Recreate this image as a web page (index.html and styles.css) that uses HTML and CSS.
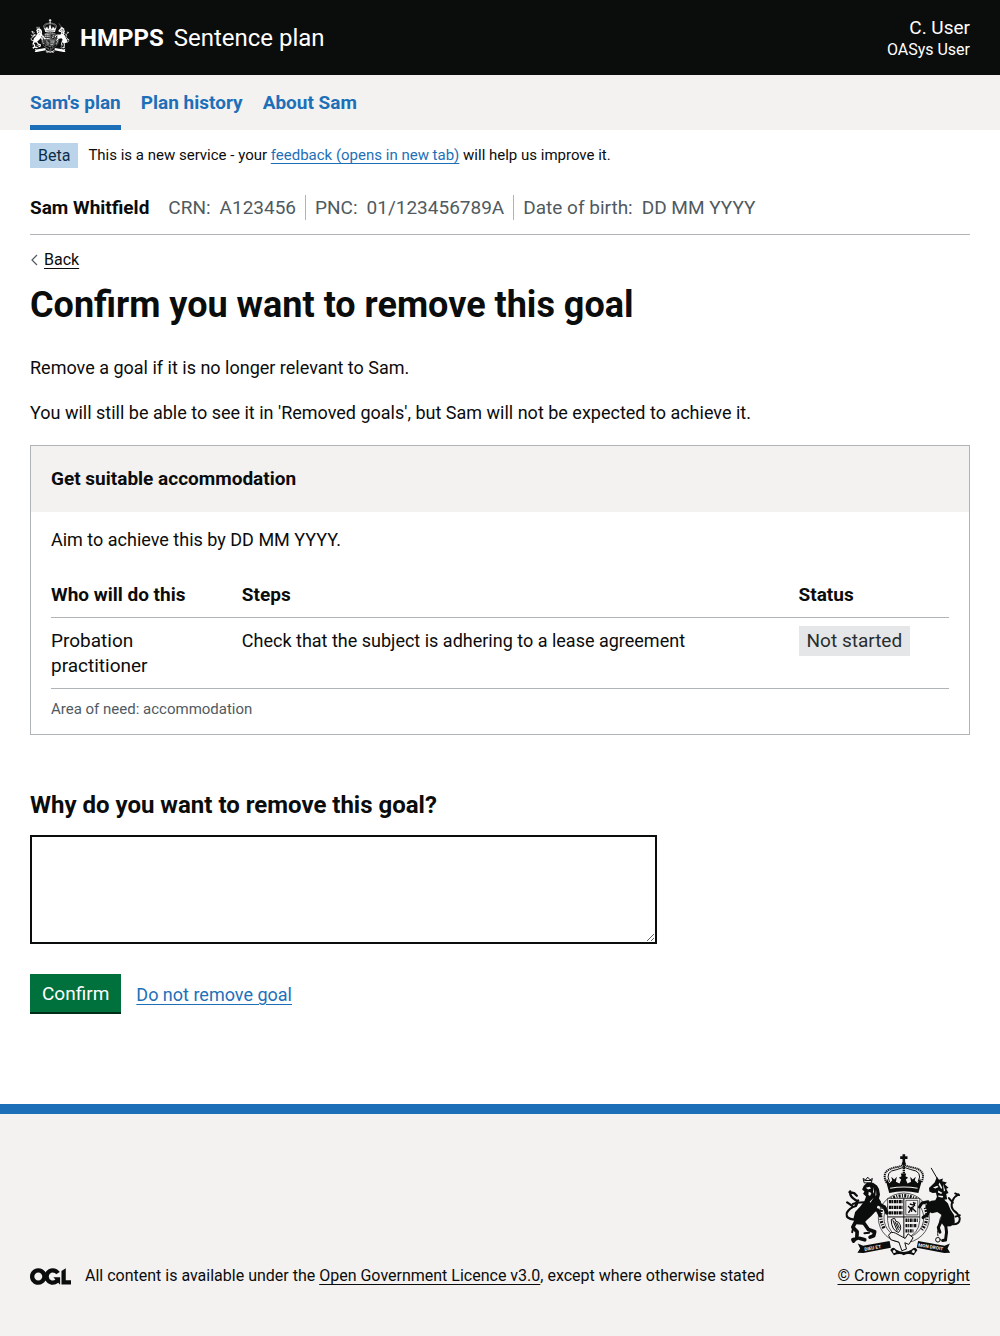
FILE: index.html
```html
<!DOCTYPE html>
<html lang="en">
<head>
<meta charset="utf-8">
<meta name="viewport" content="width=device-width, initial-scale=1">
<title>Remove goal - Sentence plan</title>
<link rel="stylesheet" href="styles.css">
</head>
<body>
<svg class="sprite" aria-hidden="true">
  <symbol id="crest" viewBox="36 26 350 308">
    <!-- crown -->
    <g fill="currentColor">
      <path d="M208 27h8v6h7v8h-7v9h-8v-9h-7v-8h7z"/>
      <circle cx="212" cy="55" r="6"/>
      <path d="M161 100l7 14 9-8-3-11 9 8 8-8-3 15 11 5 5-12-7-5 8-5-2-8h16l-2 8 8 5-7 5 5 12 11-5-3-15 8 8 9-8-3 11 9 8 7-14 4 11-9 33q-44-11-88 0l-9-33z"/>
    </g>
    <g fill="none" stroke="currentColor">
      <path stroke-width="6" stroke-dasharray="4 2" d="M160 113q-20-38 28-47 13-2 24-8 11 6 24 8 48 9 28 47"/>
      <path stroke-width="3" d="M169 110q-16-32 22-37l21-7 21 7q38 5 22 37"/>
      <path stroke-width="7" stroke-dasharray="4 2" d="M212 62v47"/>
    </g>
    <path class="crest-gap" d="M170 128q42-8 84 0l-1 3q-41-8-82 0z"/>

    <!-- garter -->
    <ellipse class="crest-gap" cx="212" cy="219" rx="77" ry="75" stroke="currentColor" stroke-width="2"/>
    <ellipse class="crest-gap" cx="212" cy="219" rx="60" ry="60" stroke="currentColor" stroke-width="2"/>
    <g fill="none" stroke="currentColor">
      <path stroke-width="10" stroke-dasharray="3 4 6 4" d="M146 188q-10 33 7 64M277 188q13 38-11 67M174 162q34-20 76 0"/>
    </g>

    <!-- quartered shield -->
    <path class="crest-gap" stroke="currentColor" stroke-width="2" d="M163 160h97v67q-2 43-48 56-47-13-49-56z"/>
    <g fill="none" stroke="currentColor">
      <path stroke-width="3" d="M212 160v123M163 216h97"/>
      <path stroke-width="10" stroke-dasharray="8 1 4 2" d="M167 170h41M167 187h41M167 204h41"/>
      <path stroke-width="2" d="M218 166h36v44h-36z"/>
      <path stroke-width="4" d="M226 204l7-12-8-9M235 201l2-12 12 12M230 177l14 4-3-10M242 180l5-7M231 190l12-6"/>
      <path stroke-width="3" d="M174 224q0 32 22 39 13-15 0-31-9 1-12-12zM179 226l13 32M185 230l11 25M191 234l8 16"/>
      <path stroke-width="10" stroke-dasharray="6 2 3 2" d="M217 226h39M217 242h35M217 258h26"/>
    </g>

    <!-- lion -->
    <g fill="none" stroke="currentColor" stroke-linejoin="round" stroke-linecap="round">
      <path stroke-width="3" d="M92 112l-3-12 8 4 6-8 7 8 7-4-3 12zM94 106h20"/>
      <path stroke-width="7" d="M62 224q-26-2-23-19 8-16 28-22 10-14-4-20-15-10-13-24M41 172l14 10M48 141l14 3 8 8M74 166l-7 11"/>
      <path stroke-width="11" d="M128 172l25 14 8 18M115 190l18 6 7 14M71 222l-13 25 13 14-1 20-12 4M88 230l17 24 19 7-3 12-11 4M64 284l-4 5M80 281l14 4"/>
      <path stroke-width="6" d="M60 246l-4 16M70 281l22 2M107 264l-14 1M92 172l-22 1-12 4"/>
    </g>
    <g fill="currentColor">
      <path d="M91 122l10-9 18 0 12 8 6 11 3 16-3 12 7 12-12 12-4 14-14 15-15 14-11 13-21-2-7-18 5-19 16-17 12-16 5-14-9-8 4-7-7-6z"/>
    </g>
    <path class="crest-gap" d="M97 128l12-3 4 5-9 3zM106 140l8 4-4 9-5-3zM119 126l3 14-3 6zM128 134l1 16-3 3zM121 158l-10 15-2-3z"/>

    <!-- unicorn -->
    <g fill="none" stroke="currentColor" stroke-linejoin="round" stroke-linecap="round">
      <path stroke-width="3" d="M295 69l19 33"/>
      <path stroke-width="6" d="M357 238q24 2 24-17-5-16-18-24-11-12-4-29 5-14 18-20M379 150l-12-5M360 173l-12-14M381 211l-13 4"/>
      <path stroke-width="9" d="M285 170l-18 4-8 12M292 187l-8 21-14 10M338 238l3 24-3 23M327 225l-11 23 5 14M338 286l-9 1"/>
      <path stroke-width="3" stroke-dasharray="6 3" d="M331 172q18 6 7 26-19 18-19 40-7 19-4 35"/>
      <circle cx="315" cy="285" r="7" stroke-width="3"/>
    </g>
    <g fill="currentColor">
      <path d="M288 129l17-17 7-17 6 9 12-4-2 8 14 4-6 6 11 10-7 3 7 13-7 3 3 16-9 1 11 11 8 19 11 17 2 22-12 11-20 1-12-16 4-19-13-9-16 4-14-7-6-12 5-12 13-7 12-1 5-10-3-13-10 1-10-5z"/>
    </g>
    <path class="crest-gap" d="M300 127l13-5 4 4-10 4zM320 112l8 16-3 4-8-14zM330 116l7 20-4 3zM316 136l12 7-3 4-10-5zM316 151l15 2-2 5-13-3z"/>

    <!-- base and motto ribbon -->
    <path class="crest-gap" stroke="currentColor" stroke-width="3" d="M166 272q6-14 21-7l29 16 9-14 15 12-13 20-12-5 5 19-14 5-9-26-24-7z"/>
    <g fill="currentColor">
      <path d="M73 296l16 7 80-14 4 20-83 16-18-1 8-13zM351 296l-16 7-80-14-4 20 83 16 18-1-8-13z"/>
      <path d="M171 316q9-12 17-2 11 7 24 8 13-1 24-8 9-10 17 2l-11 16q-18-8-30 0-12-8-30 0z"/>
    </g>
    <path class="crest-gap" d="M178 318l6-3 5 8-8 3zM246 318l-6-3-5 8 8 3z"/>
  </symbol>
</svg>

<header class="header">
  <div class="container header-row">
    <a class="brand" href="#">
      <svg class="brand-crest" aria-hidden="true"><use href="#crest"/></svg>
      <strong>HMPPS</strong>
      <span>Sentence plan</span>
    </a>
    <div class="user">
      <span class="user-name">C. User</span>
      <span class="user-role">OASys User</span>
    </div>
  </div>
</header>

<nav class="nav" aria-label="Primary">
  <ul class="container nav-list">
    <li><a class="nav-link nav-link-current" href="#" aria-current="page">Sam's plan</a></li>
    <li><a class="nav-link" href="#">Plan history</a></li>
    <li><a class="nav-link" href="#">About Sam</a></li>
  </ul>
</nav>

<div class="container">
  <div class="phase">
    <strong class="tag tag-phase">Beta</strong>
    <span class="phase-text">This is a new service - your <a class="link" href="#">feedback (opens in new tab)</a> will help us improve it.</span>
  </div>

  <div class="person">
    <strong class="person-name">Sam Whitfield</strong>
    <dl class="person-facts">
      <div class="fact"><dt>CRN:</dt><dd>A123456</dd></div>
      <div class="fact"><dt>PNC:</dt><dd>01/123456789A</dd></div>
      <div class="fact"><dt>Date of birth:</dt><dd>DD MM YYYY</dd></div>
    </dl>
  </div>

  <a class="back" href="#">
    <svg class="back-icon" viewBox="0 0 8 12" aria-hidden="true"><path d="M7 1L2 6l5 5" fill="none" stroke="#505a5f" stroke-width="1.2"/></svg>
    <span class="back-text">Back</span>
  </a>

  <main class="main">
    <h1 class="title">Confirm you want to remove this goal</h1>
    <p class="body">Remove a goal if it is no longer relevant to Sam.</p>
    <p class="body">You will still be able to see it in 'Removed goals', but Sam will not be expected to achieve it.</p>

    <section class="card">
      <h2 class="card-head">Get suitable accommodation</h2>
      <div class="card-body">
        <p class="body">Aim to achieve this by DD MM YYYY.</p>
        <table class="steps">
          <thead>
            <tr><th class="col-who" scope="col">Who will do this</th><th class="col-step" scope="col">Steps</th><th scope="col">Status</th></tr>
          </thead>
          <tbody>
            <tr>
              <td class="cell-who">Probation practitioner</td>
              <td class="cell-step">Check that the subject is adhering to a lease agreement</td>
              <td class="cell-status"><strong class="tag tag-status">Not started</strong></td>
            </tr>
          </tbody>
        </table>
        <p class="need">Area of need: accommodation</p>
      </div>
    </section>

    <form class="form">
      <label class="label" for="reason">Why do you want to remove this goal?</label>
      <textarea class="textarea" id="reason" name="reason" rows="4"></textarea>
      <div class="actions">
        <button class="button" type="button">Confirm</button>
        <a class="link" href="#">Do not remove goal</a>
      </div>
    </form>
  </main>
</div>

<footer class="footer">
  <div class="container footer-row">
    <div class="licence">
      <svg class="ogl" viewBox="0 0 483 196" aria-hidden="true"><path fill="currentColor" d="M421.5 142.8V.1l-50.7 32.3v161.1h112.4v-50.7zm-122.3-9.6A47.12 47.12 0 0 1 221 97.8c0-26 21.1-47.1 47.1-47.1 16.7 0 31.4 8.7 39.7 21.8l42.7-27.2A97.63 97.63 0 0 0 268.1 0c-36.5 0-68.3 20.1-85.1 49.7A98 98 0 0 0 97.8 0C43.9 0 0 43.9 0 97.8s43.9 97.8 97.8 97.8c36.5 0 68.3-20.1 85.1-49.7a97.76 97.76 0 0 0 149.6 25.4l19.4 22.2h3v-87.8h-80l24.3 27.5zM97.8 145c-26 0-47.1-21.1-47.1-47.1s21.1-47.1 47.1-47.1 47.1 21.1 47.1 47.1S123.8 145 97.8 145"/></svg>
      <span>All content is available under the <a class="link link-dark" href="#">Open Government Licence v3.0</a>, except where otherwise stated</span>
    </div>
    <a class="copyright" href="#">
      <svg class="footer-crest" viewBox="36 26 350 308" aria-hidden="true">
        <use href="#crest" x="36" y="26" width="350" height="308"/>
        <path id="ribbon-left" fill="none" d="M94 319l76-14"/>
        <path id="ribbon-right" fill="none" d="M255 305l84 14"/>
        <g class="motto">
          <text><textPath href="#ribbon-left">DIEU ET</textPath></text>
          <text><textPath href="#ribbon-right">MON DROIT</textPath></text>
        </g>
      </svg>
      <span class="copyright-text">© Crown copyright</span>
    </a>
  </div>
</footer>
</body>
</html>
```
FILE: styles.css
```css
:root {
  --ink: #0b0c0c;
  --muted: #505a5f;
  --line: #b1b4b6;
  --pale: #f3f2f1;
  --blue: #1d70b8;
}

* { box-sizing: border-box; }

body {
  margin: 0;
  color: var(--ink);
  background: #fff;
  font-family: Roboto, "Liberation Sans", Arial, sans-serif;
  font-size: 19px;
  line-height: 25px;
}

h1, h2, p, ul, dl, dd { margin: 0; padding: 0; }
ul { list-style: none; }

.sprite { display: none; }
.container { max-width: 1260px; margin: 0 auto; padding: 0 30px; }
.crest-gap { fill: var(--gap); }
.motto { fill: var(--gap); font-size: 14px; font-weight: 700; }

.link {
  color: var(--blue);
  text-decoration: underline;
  text-decoration-thickness: 1px;
  text-underline-offset: 3px;
}
.link-dark { color: var(--ink); }

/* Header */
.header { background: var(--ink); color: #fff; --gap: #0b0c0c; }
.header-row {
  display: flex;
  justify-content: space-between;
  align-items: center;
  padding-top: 15px;
  padding-bottom: 15px;
}
.brand {
  display: flex;
  align-items: center;
  gap: 10px;
  color: inherit;
  font-size: 24px;
  line-height: 30px;
  text-decoration: none;
}
.brand-crest { width: 40px; height: 34px; margin-bottom: 3px; }
.user { display: flex; flex-direction: column; text-align: right; }
.user-role { font-size: 16px; line-height: 20px; }

/* Navigation */
.nav { background: var(--pale); }
.nav-list { display: flex; gap: 20px; }
.nav-link {
  display: block;
  padding: 15px 0 10px;
  border-bottom: 5px solid transparent;
  color: var(--blue);
  font-weight: 700;
  text-decoration: none;
}
.nav-link-current { border-color: var(--blue); }

/* Phase banner and person summary */
.tag { display: inline-block; font-weight: 400; }
.tag-phase { padding: 0 8px; background: #bbd4ea; color: #0c2d4a; font-size: 16px; }
.phase {
  display: flex;
  gap: 10px;
  padding: 13px 0 27px;
}
.phase-text { font-size: 15px; }
.person {
  display: flex;
  gap: 19px;
  padding-bottom: 14px;
  border-bottom: 1px solid var(--line);
}
.person-facts { display: flex; color: var(--muted); }
.fact { display: flex; gap: 9px; }
.fact + .fact { margin-left: 9px; padding-left: 9px; border-left: 1px solid var(--line); }

.back {
  display: inline-flex;
  align-items: center;
  gap: 6px;
  margin: 15px 0;
  color: var(--ink);
  font-size: 16px;
  line-height: 20px;
  text-decoration: none;
  vertical-align: top;
}
.back-icon { width: 8px; height: 12px; }
.back-text, .copyright-text {
  text-decoration: underline;
  text-decoration-thickness: 1px;
  text-underline-offset: 3px;
}

/* Main content */
.main { padding-bottom: 90px; }
.title { margin-bottom: 30px; font-size: 36px; line-height: 40px; }
.body { margin-bottom: 20px; font-size: 18px; }

.card { border: 1px solid var(--line); }
.card-head {
  padding: 20px;
  border-bottom: 1px solid var(--pale);
  background: var(--pale);
  font-size: 19px;
}
.card-body { padding: 15px 20px; }
.steps { width: 100%; border-collapse: collapse; table-layout: fixed; }
.steps th, .steps td {
  padding: 10px 20px 10px 0;
  border-bottom: 1px solid var(--line);
  text-align: left;
  vertical-align: top;
}
.steps .cell-who { padding-right: 60px; }
.cell-step { font-size: 18px; }
.steps .cell-status { padding-top: 8px; padding-bottom: 0; }
.steps th:last-child, .steps td:last-child { padding-right: 0; }
.col-who { width: 21.25%; }
.col-step { width: 62%; }
.tag-status { padding: 2px 8px 3px; background: #e5e6e7; color: #282d30; }
.need { margin-top: 10px; color: var(--muted); font-size: 15px; line-height: 20px; }

/* Form */
.form { margin-top: 55px; }
.label { display: block; margin-bottom: 15px; font-size: 24px; font-weight: 700; line-height: 30px; }
.textarea {
  display: block;
  width: calc(100% * 2 / 3);
  height: 109px;
  padding: 5px;
  border: 2px solid var(--ink);
  border-radius: 0;
  font: inherit;
  resize: vertical;
}
.actions { display: flex; align-items: center; gap: 15px; margin-top: 30px; font-size: 18px; }
.button {
  padding: 7px 12px 6px;
  border: 0;
  border-bottom: 2px solid #002d18;
  background: #00703c;
  color: #fff;
  font: inherit;
  font-size: 19px;
}

/* Footer */
.footer {
  padding: 40px 0 50px;
  border-top: 10px solid var(--blue);
  background: var(--pale);
  --gap: #f3f2f1;
  font-size: 16px;
  line-height: 20px;
}
.footer-row { display: flex; justify-content: space-between; align-items: flex-end; gap: 30px; }
.licence { display: flex; align-items: center; gap: 14px; }
.ogl { width: 41px; height: 17px; }
.copyright { display: flex; flex-direction: column; align-items: center; gap: 10px; color: var(--ink); text-decoration: none; }
.footer-crest { width: 117px; height: 102px; }
```
